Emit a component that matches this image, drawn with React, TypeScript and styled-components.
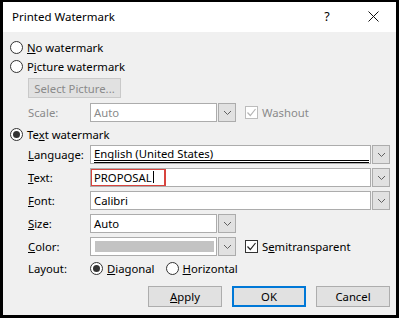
import React from "react";
import styled, { createGlobalStyle } from "styled-components";

const GlobalStyle = createGlobalStyle`
  html, body {
    margin: 0;
    padding: 0;
    background: #ffffff;
  }
  * {
    box-sizing: border-box;
  }
`;

const Chevron = () => (
  <svg width="9" height="6" viewBox="0 0 9 6">
    <polyline points="1,1 4.5,4.5 8,1" fill="none" stroke="#606060" strokeWidth="1" />
  </svg>
);

const CheckMark = ({ color }: { color: string }) => (
  <svg width="11" height="11" viewBox="0 0 11 11">
    <polyline points="1.5,5.5 4.3,8.5 9.5,2" fill="none" stroke={color} strokeWidth="1.2" />
  </svg>
);

const App = () => {
  return (
    <Window>
      <GlobalStyle />
      <TitleBar>
        <Title>Printed Watermark</Title>
        <TitleButtons>
          <HelpGlyph>?</HelpGlyph>
          <CloseGlyph>
            <svg width="11" height="11" viewBox="0 0 11 11">
              <path d="M0.5 0.5 L10.5 10.5 M10.5 0.5 L0.5 10.5" stroke="#111" strokeWidth="1" />
            </svg>
          </CloseGlyph>
        </TitleButtons>
      </TitleBar>

      <Body>
        <RadioRow>
          <Radio />
          <span>
            <u>N</u>o watermark
          </span>
        </RadioRow>
        <RadioRow>
          <Radio />
          <span>
            P<u>i</u>cture watermark
          </span>
        </RadioRow>

        <Indent>
          <SelectButton>Select Picture...</SelectButton>
          <FieldRow $top={5}>
            <Label $disabled>Scale:</Label>
            <Combo $width={146}>
              <Input $disabled>Auto</Input>
              <Arrow>
                <Chevron />
              </Arrow>
            </Combo>
            <CheckRow $disabled>
              <CheckBox $disabled>
                <CheckMark color="#b5b5b5" />
              </CheckBox>
              <span>Washout</span>
            </CheckRow>
          </FieldRow>
        </Indent>

        <RadioRow $top={3}>
          <Radio $checked />
          <span>
            Te<u>x</u>t watermark
          </span>
        </RadioRow>

        <Indent>
          <FieldRow $top={1}>
            <Label>
              <u>L</u>anguage:
            </Label>
            <Combo $width={300}>
              <Input>
                <DoubleLined>English (United States)</DoubleLined>
              </Input>
              <Arrow>
                <Chevron />
              </Arrow>
            </Combo>
          </FieldRow>
          <FieldRow $top={4}>
            <Label>
              <u>T</u>ext:
            </Label>
            <Combo $width={300}>
              <Input $flush>
                <Highlight>
                  PROPOSAL
                  <Caret />
                </Highlight>
              </Input>
              <Arrow>
                <Chevron />
              </Arrow>
            </Combo>
          </FieldRow>
          <FieldRow $top={4}>
            <Label>
              <u>F</u>ont:
            </Label>
            <Combo $width={300}>
              <Input>Calibri</Input>
              <Arrow>
                <Chevron />
              </Arrow>
            </Combo>
          </FieldRow>
          <FieldRow $top={4}>
            <Label>
              <u>S</u>ize:
            </Label>
            <Combo $width={146}>
              <Input>Auto</Input>
              <Arrow>
                <Chevron />
              </Arrow>
            </Combo>
          </FieldRow>
          <FieldRow $top={4}>
            <Label>
              <u>C</u>olor:
            </Label>
            <Combo $width={146}>
              <Input>
                <Swatch />
              </Input>
              <Arrow>
                <Chevron />
              </Arrow>
            </Combo>
            <CheckRow>
              <CheckBox>
                <CheckMark color="#222" />
              </CheckBox>
              <span>
                S<u>e</u>mitransparent
              </span>
            </CheckRow>
          </FieldRow>
          <FieldRow $top={3}>
            <Label>Layout:</Label>
            <LayoutOptions>
              <InlineRadio>
                <Radio $checked />
                <span>
                  <u>D</u>iagonal
                </span>
              </InlineRadio>
              <InlineRadio>
                <Radio />
                <span>
                  <u>H</u>orizontal
                </span>
              </InlineRadio>
            </LayoutOptions>
          </FieldRow>
        </Indent>

        <ButtonBar>
          <DialogButton>
            <u>A</u>pply
          </DialogButton>
          <DialogButton $primary>OK</DialogButton>
          <DialogButton>Cancel</DialogButton>
        </ButtonBar>
      </Body>
    </Window>
  );
};

export default App;

const Window = styled.div`
  width: 399px;
  height: 318px;
  border: 3px solid #000000;
  border-top-width: 2px;
  background: #f0f0f0;
  display: flex;
  flex-direction: column;
  font-family: "Noto Sans", "Open Sans", sans-serif;
  font-size: 11.3px;
  color: #000000;
  overflow: hidden;

  u {
    text-decoration: underline;
    text-underline-offset: 1px;
  }
`;

const TitleBar = styled.div`
  height: 30px;
  background: #ffffff;
  display: flex;
  align-items: center;
  justify-content: space-between;
  padding-left: 9px;
  flex-shrink: 0;
`;

const Title = styled.span`
  font-size: 11.5px;
  margin-top: -2px;
`;

const TitleButtons = styled.div`
  display: flex;
  align-items: center;
  height: 100%;
`;

const HelpGlyph = styled.span`
  width: 46px;
  text-align: center;
  font-size: 12.5px;
  margin-top: -2px;
`;

const CloseGlyph = styled.span`
  width: 46px;
  display: flex;
  justify-content: center;
  margin-top: -2px;
`;

const Body = styled.div`
  padding: 6px 6px 0 7px;
  display: flex;
  flex-direction: column;
`;

const RadioRow = styled.div<{ $top?: number }>`
  display: flex;
  align-items: center;
  gap: 4px;
  height: 19px;
  margin-top: ${(p) => p.$top ?? 0}px;
`;

const Radio = styled.span<{ $checked?: boolean }>`
  width: 13px;
  height: 13px;
  border-radius: 50%;
  border: 1px solid #333333;
  background: #ffffff;
  display: inline-flex;
  align-items: center;
  justify-content: center;
  flex-shrink: 0;

  &::after {
    content: "";
    display: ${(p) => (p.$checked ? "block" : "none")};
    width: 7px;
    height: 7px;
    border-radius: 50%;
    background: #333333;
  }
`;

const Indent = styled.div`
  padding-left: 18px;
  display: flex;
  flex-direction: column;
`;

const SelectButton = styled.div`
  width: 93px;
  height: 20px;
  margin-top: 2px;
  background: #e1e1e1;
  border: 1px solid #c9c9c9;
  color: #8a8a8a;
  display: flex;
  align-items: center;
  justify-content: center;
`;

const FieldRow = styled.div<{ $top?: number }>`
  display: flex;
  align-items: center;
  height: 19px;
  margin-top: ${(p) => p.$top ?? 0}px;
`;

const Label = styled.span<{ $disabled?: boolean }>`
  width: 62px;
  flex-shrink: 0;
  color: ${(p) => (p.$disabled ? "#8a8a8a" : "#000000")};
`;

const Combo = styled.div<{ $width: number }>`
  width: ${(p) => p.$width}px;
  height: 19px;
  display: flex;
  gap: 1px;
`;

const Input = styled.div<{ $disabled?: boolean; $flush?: boolean }>`
  flex: 1;
  height: 100%;
  background: #ffffff;
  border: 1px solid #acacac;
  display: flex;
  align-items: center;
  padding-left: ${(p) => (p.$flush ? 0 : 3)}px;
  color: ${(p) => (p.$disabled ? "#8a8a8a" : "#000000")};
  white-space: nowrap;
  overflow: hidden;
`;

const Arrow = styled.div`
  width: 18px;
  height: 100%;
  background: #e1e1e1;
  border: 1px solid #acacac;
  display: flex;
  align-items: center;
  justify-content: center;
  flex-shrink: 0;
`;

const DoubleLined = styled.span`
  flex: 1;
  align-self: stretch;
  display: flex;
  align-items: center;
  border-bottom: 3px double #000000;
  margin-right: 1px;
  padding-top: 1px;
`;

const Highlight = styled.span`
  height: calc(100% + 2px);
  margin: -1px 0 0 -1px;
  width: 76px;
  border: 2px solid #d8443e;
  display: flex;
  align-items: center;
  padding-left: 2px;
`;

const Caret = styled.span`
  width: 1px;
  height: 12px;
  background: #000000;
  margin-left: 1px;
`;

const Swatch = styled.span`
  width: 119px;
  height: 11px;
  margin-left: 1px;
  background: #c3c3c3;
`;

const CheckRow = styled.div<{ $disabled?: boolean }>`
  display: flex;
  align-items: center;
  gap: 4px;
  margin-left: 9px;
  color: ${(p) => (p.$disabled ? "#8a8a8a" : "#000000")};
`;

const CheckBox = styled.span<{ $disabled?: boolean }>`
  width: 13px;
  height: 13px;
  border: 1px solid ${(p) => (p.$disabled ? "#bcbcbc" : "#333333")};
  background: #ffffff;
  display: flex;
  align-items: center;
  justify-content: center;
`;

const LayoutOptions = styled.div`
  display: flex;
  align-items: center;
  gap: 11px;
`;

const InlineRadio = styled.div`
  display: flex;
  align-items: center;
  gap: 4px;
`;

const ButtonBar = styled.div`
  display: flex;
  justify-content: flex-end;
  gap: 10px;
  margin-top: 8px;
`;

const DialogButton = styled.div<{ $primary?: boolean }>`
  width: 74px;
  height: 21px;
  background: #e1e1e1;
  border: ${(p) => (p.$primary ? "2px solid #0078d7" : "1px solid #adadad")};
  display: flex;
  align-items: center;
  justify-content: center;
`;
